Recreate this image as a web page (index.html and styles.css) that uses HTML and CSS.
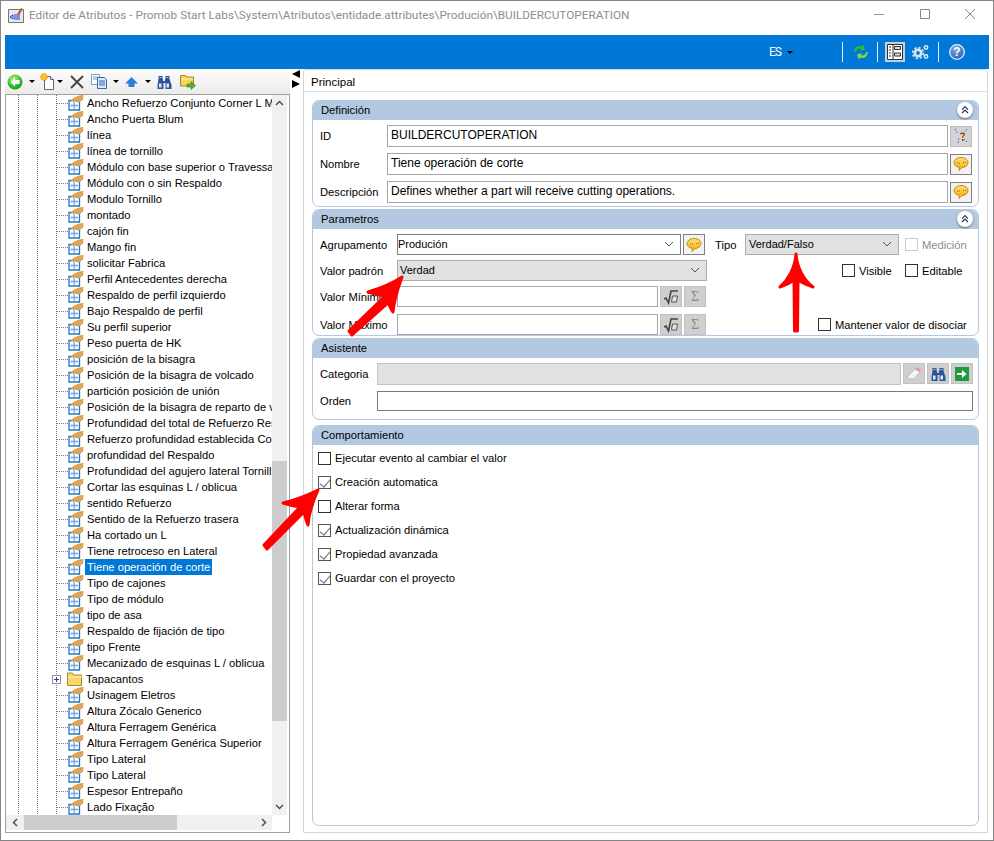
FILE: index.html
```html
<!DOCTYPE html>
<html lang="es">

<head>
    <meta charset="UTF-8">
    <title>Editor de Atributos</title>
    <link rel="stylesheet" href="styles.css">
</head>

<body>
    <svg class="defs" width="0" height="0">
        <defs>
            <radialGradient id="greenball" cx=".4" cy=".3" r=".8">
                <stop offset="0" stop-color="#b8f07a"/>
                <stop offset=".6" stop-color="#2fc02f"/>
                <stop offset="1" stop-color="#0f8a1e"/>
            </radialGradient>
            <radialGradient id="blueball" cx=".4" cy=".3" r=".8">
                <stop offset="0" stop-color="#7fa8e8"/>
                <stop offset="1" stop-color="#2a55b0"/>
            </radialGradient>
            <linearGradient id="bubblefill" x1="0" y1="0" x2="0" y2="1">
                <stop offset="0" stop-color="#ffe27a"/>
                <stop offset="1" stop-color="#f5a800"/>
            </linearGradient>
        </defs>
        <symbol id="attr" viewBox="0 0 16 16">
            <path d="M1 5.500h10.500V15H1z" fill="#fff" stroke="#1f78c8" stroke-width="1.300"/>
            <path d="M6.200 7v7M2.500 10.500h7.500" stroke="#6aa8e0" stroke-width="1.300"/>
            <path d="M3 6C5 2 10 .5 15.500 0L15 4.500 11 7.500z" fill="#d99a48"/>
            <path d="M6 5.500l3-3.500M8.500 6l3-4.500M11 6.500l3-5" stroke="#f3dcb0" stroke-width=".5"/>
        </symbol>
        <symbol id="bubble" viewBox="0 0 16 16">
            <path d="M8 1.500c4 0 7 2 7 5s-3 5-6 5l-3 3 .5-3.200C3 11 1 9 1 6.500s3-5 7-5z" fill="url(#bubblefill)" stroke="#c8860a"/>
            <path d="M4 7h1M6 7h1M10 6.500h1M12 6.500h1" stroke="#a86400"/>
        </symbol>
        <symbol id="binoculars" viewBox="0 0 16 16">
            <path d="M2.500 2h4v3H7v2h2V5h.5V2h4v3l2 6v4h-6V9H7.500v6h-6v-4l1-6z" fill="#2f5298"/>
            <path d="M3 9.500h2.500v4H3zM10.500 9.500H13v4h-2.500z" fill="#dfeafa"/>
            <path d="M3.500 3.500h2M10.500 3.500h2" stroke="#b4c9e8"/>
        </symbol>
        <symbol id="collapse" viewBox="0 0 16 16">
            <path d="M4 7.500l4-4 4 4M4 12l4-4 4 4" fill="none" stroke="#1f3564" stroke-width="1.600"/>
        </symbol>
        <symbol id="chevron" viewBox="0 0 10 6">
            <path d="M1 1l4 4 4-4" fill="none" stroke="#555" stroke-width="1"/>
        </symbol>
        <symbol id="root" viewBox="0 0 16 16">
            <path d="M1 10l2-1 2.500 5L8 2h7" fill="none" stroke="#444" stroke-width="1.600"/>
            <path d="M9.500 7h5l-1 6h-5z" fill="#e4e4e4" stroke="#555"/>
        </symbol>
    </svg>

    <div class="window">
        <div class="titlebar">
            <svg class="app-icon" width="16" height="16" viewBox="0 0 16 16">
                <path d="M.5 2.500h15v13H.5z" fill="#e8e8e8" stroke="#777"/>
                <path d="M2 10l3-2v4zM6 8h6M6 10h6M6 12h6" fill="none" stroke="#1c3fd0"/>
                <path d="M9 7l4-6 2 1-4 6z" fill="#b4622a"/>
            </svg>
            <span class="title-text">Editor de Atributos - Promob Start Labs\System\Atributos\entidade.attributes\Produción\BUILDERCUTOPERATION</span>
            <div class="win-buttons">
                <svg width="12" height="12" viewBox="0 0 12 12"><path d="M1 6.500h10" stroke="#999"/></svg>
                <svg width="12" height="12" viewBox="0 0 12 12"><path d="M1.500 1.500h9v9h-9z" fill="none" stroke="#888"/></svg>
                <svg width="12" height="12" viewBox="0 0 12 12"><path d="M1 1l10 10M11 1L1 11" stroke="#888"/></svg>
            </div>
        </div>

        <div class="bluebar">
            <span class="lang">ES</span>
            <span class="caret caret-lang"></span>
            <span class="blue-sep sep-a"></span>
            <svg class="blue-refresh" width="16" height="16" viewBox="0 0 16 16">
                <path d="M1 7.500C1.500 3.500 5 1 9 2.300L10.500 .5 12 6 6.500 6.500 8 4.500C5.500 4 3.500 5.300 3 8z" fill="#2fb83a"/>
                <path d="M15 8.500C14.500 12.500 11 15 7 13.700L5.500 15.500 4 10 9.500 9.500 8 11.500C10.500 12 12.500 10.700 13 8z" fill="#7ed64a"/>
            </svg>
            <span class="blue-sep sep-b"></span>
            <span class="blue-active">
                <svg width="16" height="16" viewBox="0 0 16 16">
                    <path d="M.5.500h15v15H.5z" fill="#fff" stroke="#333"/>
                    <path d="M6 .500v15" stroke="#333"/>
                    <path d="M2 3h2M2 6h2M2 9h2M2 12h2" stroke="#333"/>
                    <path d="M7.500 2.500h6v3h-6zM7.500 9h6v3h-6z" fill="#ddd" stroke="#333"/>
                </svg>
            </span>
            <svg class="blue-gears" width="17" height="16" viewBox="0 0 17 16">
                <circle cx="6" cy="9" r="3.200" fill="none" stroke="#dfe6ec" stroke-width="2.600"/>
                <circle cx="6" cy="9" r="5.400" fill="none" stroke="#dfe6ec" stroke-width="1.600" stroke-dasharray="2.200 2"/>
                <circle cx="14" cy="3.500" r="1.700" fill="none" stroke="#dfe6ec" stroke-width="1.500"/>
                <circle cx="14" cy="12.500" r="1.700" fill="none" stroke="#dfe6ec" stroke-width="1.500"/>
            </svg>
            <span class="blue-sep sep-c"></span>
            <svg class="blue-help" width="16" height="16" viewBox="0 0 16 16">
                <circle cx="8" cy="8" r="7.300" fill="url(#blueball)" stroke="#e6eefa" stroke-width="1.300"/>
                <text x="8" y="12" text-anchor="middle" class="help-mark">?</text>
            </svg>
        </div>

        <div class="workspace">
            <div class="left-col">
                <div class="toolbar">
                    <svg class="tool-back" width="16" height="16" viewBox="0 0 16 16">
                        <circle cx="8" cy="8" r="7.500" fill="url(#greenball)"/>
                        <path d="M8 3.500L3.500 8 8 12.500V10h4.500V6H8z" fill="#fff"/>
                    </svg>
                    <span class="caret caret-tool"></span>
                    <svg class="tool-new" width="16" height="17" viewBox="0 0 16 17">
                        <path d="M4.500 3.500h6l3 3v10h-9z" fill="#fff" stroke="#667"/>
                        <path d="M10.500 3.500v3h3" fill="#dde" stroke="#667"/>
                        <circle cx="4" cy="4" r="3.400" fill="#f7c22e" stroke="#e08a10" stroke-dasharray="1.500 1"/>
                    </svg>
                    <span class="caret caret-tool caret-new"></span>
                    <svg class="tool-del" width="14" height="14" viewBox="0 0 14 14"><path d="M1 1l12 12M13 1L1 13" stroke="#444" stroke-width="1.800"/></svg>
                    <svg class="tool-copy" width="16" height="15" viewBox="0 0 16 15">
                        <path d="M.5.500h8v10h-8z" fill="#fff" stroke="#7c9cca"/>
                        <path d="M2 3h5M2 5h5" stroke="#7c9cca"/>
                        <path d="M6.500 3.500h7l2 2v9h-9z" fill="#dce8f6" stroke="#3a66a8"/>
                        <path d="M8 7h6M8 9h6M8 11h6" stroke="#3a66a8"/>
                    </svg>
                    <span class="caret caret-tool caret-copy"></span>
                    <svg class="tool-up" width="13" height="10" viewBox="0 0 13 10"><path d="M6.500 0L13 6.500H9.500V10h-6V6.500H0z" fill="#2f7fd8"/></svg>
                    <span class="caret caret-tool caret-up"></span>
                    <svg class="tool-find" width="16" height="16"><use href="#binoculars"/></svg>
                    <svg class="tool-folder" width="16" height="16" viewBox="0 0 16 16">
                        <path d="M.5 1.500h5l1 1.500h7v9H.5z" fill="#f6d55e" stroke="#a88a20"/>
                        <path d="M1.500 5h11" stroke="#fff2b0"/>
                        <path d="M7 10h4V7.500l4.500 4-4.500 4V13H7z" fill="#58b030" stroke="#3a7a18" stroke-width=".6"/>
                    </svg>
                </div>

                <div class="tree">
                    <div class="tree-main">
                        <div class="tree-list">
                            <div class="tree-row"><span class="dash"></span><svg class="row-icon"><use href="#attr"/></svg><span class="row-text">Ancho Refuerzo Conjunto Corner L M</span></div>
                            <div class="tree-row"><span class="dash"></span><svg class="row-icon"><use href="#attr"/></svg><span class="row-text">Ancho Puerta Blum</span></div>
                            <div class="tree-row"><span class="dash"></span><svg class="row-icon"><use href="#attr"/></svg><span class="row-text">línea</span></div>
                            <div class="tree-row"><span class="dash"></span><svg class="row-icon"><use href="#attr"/></svg><span class="row-text">línea de tornillo</span></div>
                            <div class="tree-row"><span class="dash"></span><svg class="row-icon"><use href="#attr"/></svg><span class="row-text">Módulo con base superior o Travessa</span></div>
                            <div class="tree-row"><span class="dash"></span><svg class="row-icon"><use href="#attr"/></svg><span class="row-text">Módulo con o sin Respaldo</span></div>
                            <div class="tree-row"><span class="dash"></span><svg class="row-icon"><use href="#attr"/></svg><span class="row-text">Modulo Tornillo</span></div>
                            <div class="tree-row"><span class="dash"></span><svg class="row-icon"><use href="#attr"/></svg><span class="row-text">montado</span></div>
                            <div class="tree-row"><span class="dash"></span><svg class="row-icon"><use href="#attr"/></svg><span class="row-text">cajón fin</span></div>
                            <div class="tree-row"><span class="dash"></span><svg class="row-icon"><use href="#attr"/></svg><span class="row-text">Mango fin</span></div>
                            <div class="tree-row"><span class="dash"></span><svg class="row-icon"><use href="#attr"/></svg><span class="row-text">solicitar Fabrica</span></div>
                            <div class="tree-row"><span class="dash"></span><svg class="row-icon"><use href="#attr"/></svg><span class="row-text">Perfil Antecedentes derecha</span></div>
                            <div class="tree-row"><span class="dash"></span><svg class="row-icon"><use href="#attr"/></svg><span class="row-text">Respaldo de perfil izquierdo</span></div>
                            <div class="tree-row"><span class="dash"></span><svg class="row-icon"><use href="#attr"/></svg><span class="row-text">Bajo Respaldo de perfil</span></div>
                            <div class="tree-row"><span class="dash"></span><svg class="row-icon"><use href="#attr"/></svg><span class="row-text">Su perfil superior</span></div>
                            <div class="tree-row"><span class="dash"></span><svg class="row-icon"><use href="#attr"/></svg><span class="row-text">Peso puerta de HK</span></div>
                            <div class="tree-row"><span class="dash"></span><svg class="row-icon"><use href="#attr"/></svg><span class="row-text">posición de la bisagra</span></div>
                            <div class="tree-row"><span class="dash"></span><svg class="row-icon"><use href="#attr"/></svg><span class="row-text">Posición de la bisagra de volcado</span></div>
                            <div class="tree-row"><span class="dash"></span><svg class="row-icon"><use href="#attr"/></svg><span class="row-text">partición posición de unión</span></div>
                            <div class="tree-row"><span class="dash"></span><svg class="row-icon"><use href="#attr"/></svg><span class="row-text">Posición de la bisagra de reparto de v</span></div>
                            <div class="tree-row"><span class="dash"></span><svg class="row-icon"><use href="#attr"/></svg><span class="row-text">Profundidad del total de Refuerzo Res</span></div>
                            <div class="tree-row"><span class="dash"></span><svg class="row-icon"><use href="#attr"/></svg><span class="row-text">Refuerzo profundidad establecida Co</span></div>
                            <div class="tree-row"><span class="dash"></span><svg class="row-icon"><use href="#attr"/></svg><span class="row-text">profundidad del Respaldo</span></div>
                            <div class="tree-row"><span class="dash"></span><svg class="row-icon"><use href="#attr"/></svg><span class="row-text">Profundidad del agujero lateral Tornill</span></div>
                            <div class="tree-row"><span class="dash"></span><svg class="row-icon"><use href="#attr"/></svg><span class="row-text">Cortar las esquinas L / oblicua</span></div>
                            <div class="tree-row"><span class="dash"></span><svg class="row-icon"><use href="#attr"/></svg><span class="row-text">sentido Refuerzo</span></div>
                            <div class="tree-row"><span class="dash"></span><svg class="row-icon"><use href="#attr"/></svg><span class="row-text">Sentido de la Refuerzo trasera</span></div>
                            <div class="tree-row"><span class="dash"></span><svg class="row-icon"><use href="#attr"/></svg><span class="row-text">Ha cortado un L</span></div>
                            <div class="tree-row"><span class="dash"></span><svg class="row-icon"><use href="#attr"/></svg><span class="row-text">Tiene retroceso en Lateral</span></div>
                            <div class="tree-row"><span class="dash"></span><svg class="row-icon"><use href="#attr"/></svg><span class="row-text selected">Tiene operación de corte</span></div>
                            <div class="tree-row"><span class="dash"></span><svg class="row-icon"><use href="#attr"/></svg><span class="row-text">Tipo de cajones</span></div>
                            <div class="tree-row"><span class="dash"></span><svg class="row-icon"><use href="#attr"/></svg><span class="row-text">Tipo de módulo</span></div>
                            <div class="tree-row"><span class="dash"></span><svg class="row-icon"><use href="#attr"/></svg><span class="row-text">tipo de asa</span></div>
                            <div class="tree-row"><span class="dash"></span><svg class="row-icon"><use href="#attr"/></svg><span class="row-text">Respaldo de fijación de tipo</span></div>
                            <div class="tree-row"><span class="dash"></span><svg class="row-icon"><use href="#attr"/></svg><span class="row-text">tipo Frente</span></div>
                            <div class="tree-row"><span class="dash"></span><svg class="row-icon"><use href="#attr"/></svg><span class="row-text">Mecanizado de esquinas L / oblicua</span></div>
                            <div class="tree-row folder-row">
                                <span class="plus-box"></span>
                                <svg class="folder-icon" width="16" height="14" viewBox="0 0 16 14">
                                    <path d="M.5 3V1h5l1 2h8v10.500H.5z" fill="#f6d768" stroke="#a88a2c"/>
                                    <path d="M1 5h14" stroke="#fff2b8"/>
                                </svg>
                                <span class="row-text">Tapacantos</span>
                            </div>
                            <div class="tree-row"><span class="dash"></span><svg class="row-icon"><use href="#attr"/></svg><span class="row-text">Usinagem Eletros</span></div>
                            <div class="tree-row"><span class="dash"></span><svg class="row-icon"><use href="#attr"/></svg><span class="row-text">Altura Zócalo Generico</span></div>
                            <div class="tree-row"><span class="dash"></span><svg class="row-icon"><use href="#attr"/></svg><span class="row-text">Altura Ferragem Genérica</span></div>
                            <div class="tree-row"><span class="dash"></span><svg class="row-icon"><use href="#attr"/></svg><span class="row-text">Altura Ferragem Genérica Superior</span></div>
                            <div class="tree-row"><span class="dash"></span><svg class="row-icon"><use href="#attr"/></svg><span class="row-text">Tipo Lateral</span></div>
                            <div class="tree-row"><span class="dash"></span><svg class="row-icon"><use href="#attr"/></svg><span class="row-text">Tipo Lateral</span></div>
                            <div class="tree-row"><span class="dash"></span><svg class="row-icon"><use href="#attr"/></svg><span class="row-text">Espesor Entrepaño</span></div>
                            <div class="tree-row"><span class="dash"></span><svg class="row-icon"><use href="#attr"/></svg><span class="row-text">Lado Fixação</span></div>
                        </div>
                        <div class="vscroll">
                            <svg class="scroll-end" width="15" height="16" viewBox="0 0 15 16"><path d="M4 10l3.500-3.500L11 10" fill="none" stroke="#505050" stroke-width="1.500"/></svg>
                            <div class="vscroll-track"><div class="vscroll-thumb"></div></div>
                            <svg class="scroll-end" width="15" height="16" viewBox="0 0 15 16"><path d="M4 6l3.500 3.500L11 6" fill="none" stroke="#505050" stroke-width="1.500"/></svg>
                        </div>
                    </div>
                    <div class="hscroll">
                        <svg class="scroll-end" width="18" height="15" viewBox="0 0 18 15"><path d="M11 4L7.500 7.500 11 11" fill="none" stroke="#505050" stroke-width="1.500"/></svg>
                        <div class="hscroll-track"><div class="hscroll-thumb"></div></div>
                        <svg class="scroll-end" width="17" height="15" viewBox="0 0 17 15"><path d="M7 4l3.500 3.500L7 11" fill="none" stroke="#505050" stroke-width="1.500"/></svg>
                    </div>
                </div>
            </div>

            <div class="splitter">
                <span class="split-left"></span>
                <span class="split-right"></span>
            </div>

            <div class="right-pane">
                <div class="tab-strip">Principal</div>
                <div class="groups">
                    <div class="group group-def">
                        <div class="group-head">Definición<span class="collapse"><svg width="12" height="12"><use href="#collapse"/></svg></span></div>
                        <div class="def-grid">
                            <label>ID</label>
                            <input type="text" class="field" value="BUILDERCUTOPERATION">
                            <span class="icon-btn id-btn">
                                <svg width="16" height="16" viewBox="0 0 16 16">
                                    <path d="M2 1l3 5M14 1l-2 3M5 15l1-5M14 14l-3-3" stroke="#2560d8" stroke-dasharray="1.500 1.500" fill="none"/>
                                    <path d="M7 6c0-2 5-2 5 0 0 2-2 2-2 4H9c0-2 1.500-2.500 1.500-3.800C10 5.500 9 5.500 9 6.500z" fill="#8a4a14"/>
                                    <path d="M9 11h1.500v2H9z" fill="#8a4a14"/>
                                </svg>
                            </span>
                            <label>Nombre</label>
                            <input type="text" class="field" value="Tiene operación de corte">
                            <span class="icon-btn bubble-btn"><svg width="16" height="16"><use href="#bubble"/></svg></span>
                            <label>Descripción</label>
                            <input type="text" class="field" value="Defines whether a part will receive cutting operations.">
                            <span class="icon-btn bubble-btn"><svg width="16" height="16"><use href="#bubble"/></svg></span>
                        </div>
                    </div>

                    <div class="group group-param">
                        <div class="group-head">Parametros<span class="collapse"><svg width="12" height="12"><use href="#collapse"/></svg></span></div>
                        <div class="param-body">
                            <div class="param-row">
                                <label class="param-label">Agrupamento</label>
                                <div class="combo combo-group"><span>Produción</span><svg width="10" height="6"><use href="#chevron"/></svg></div>
                                <span class="icon-btn bubble-btn btn-next"><svg width="16" height="16"><use href="#bubble"/></svg></span>
                                <label class="tipo-label">Tipo</label>
                                <div class="combo combo-off combo-tipo"><span>Verdad/Falso</span><svg width="10" height="6"><use href="#chevron"/></svg></div>
                                <span class="check check-off check-medicion"></span>
                                <span class="check-text text-off">Medición</span>
                            </div>
                            <div class="param-row">
                                <label class="param-label">Valor padrón</label>
                                <div class="combo combo-off combo-value"><span>Verdad</span><svg width="10" height="6"><use href="#chevron"/></svg></div>
                                <span class="check check-visible"></span>
                                <span class="check-text visible-text">Visible</span>
                                <span class="check"></span>
                                <span class="check-text">Editable</span>
                            </div>
                            <div class="param-row">
                                <label class="param-label">Valor Mínimo</label>
                                <input type="text" class="field field-limit">
                                <span class="icon-btn off-btn btn-next"><svg width="16" height="16"><use href="#root"/></svg></span>
                                <span class="icon-btn off-btn btn-next"><span class="sigma-mark">Σ</span></span>
                            </div>
                            <div class="param-row">
                                <label class="param-label">Valor Máximo</label>
                                <input type="text" class="field field-limit">
                                <span class="icon-btn off-btn btn-next"><svg width="16" height="16"><use href="#root"/></svg></span>
                                <span class="icon-btn off-btn btn-next"><span class="sigma-mark">Σ</span></span>
                                <span class="check check-keep"></span>
                                <span class="check-text">Mantener valor de disociar</span>
                            </div>
                        </div>
                    </div>

                    <div class="group group-wiz">
                        <div class="group-head">Asistente</div>
                        <div class="wiz-grid">
                            <label>Categoria</label>
                            <div class="wiz-cat">
                                <input type="text" class="field field-off" disabled>
                                <span class="icon-btn off-btn">
                                    <svg width="16" height="16" viewBox="0 0 16 16">
                                        <path d="M1 11l8-8 5 3-6 7H4z" fill="#f4f4f4" stroke="#bbb"/>
                                        <path d="M9 3l2-2 4 3-1 2z" fill="#f08fa0"/>
                                    </svg>
                                </span>
                                <span class="icon-btn off-btn"><svg width="16" height="16"><use href="#binoculars"/></svg></span>
                                <span class="icon-btn off-btn">
                                    <svg width="16" height="16" viewBox="0 0 16 16">
                                        <path d="M1 1h14v14H1z" fill="#229a3c"/>
                                        <path d="M3 7h5V4l4.500 4L8 12V9H3z" fill="#fff"/>
                                    </svg>
                                </span>
                            </div>
                            <label>Orden</label>
                            <input type="text" class="field field-dark">
                        </div>
                    </div>

                    <div class="group group-behave">
                        <div class="group-head">Comportamiento</div>
                        <div class="behave-list">
                            <div class="behave-row"><span class="check"></span><span class="check-text">Ejecutar evento al cambiar el valor</span></div>
                            <div class="behave-row"><span class="check checked"></span><span class="check-text">Creación automatica</span></div>
                            <div class="behave-row"><span class="check"></span><span class="check-text">Alterar forma</span></div>
                            <div class="behave-row"><span class="check checked"></span><span class="check-text">Actualización dinámica</span></div>
                            <div class="behave-row"><span class="check checked"></span><span class="check-text">Propiedad avanzada</span></div>
                            <div class="behave-row"><span class="check checked"></span><span class="check-text">Guardar con el proyecto</span></div>
                        </div>
                    </div>
                </div>
            </div>
        </div>

        <!-- red arrows drawn over the window -->
        <svg class="arrows" width="994" height="841" viewBox="0 0 994 841">
            <path d="M402 277C390 285 378 289 368 292 374 294 380 295 385 296L349 331 352 335 388 303C390 306 391 310 393 312 394 300 398 288 402 277z"/>
            <path d="M796 254C795 268 788 280 780 287 786 285 790 283 794 280L794.500 331H797.500L798 280C802 283 808 285 813 287 804 280 797 268 796 254z"/>
            <path d="M318 490C306 496 295 500 283 503 289 505 295 506 300 507L264 545 267 549 304 512C305 516 306 521 308 525 309 513 313 501 318 490z"/>
        </svg>
    </div>
</body>

</html>
```

FILE: styles.css
```css
* {
    box-sizing: border-box;
}

body {
    margin: 0;
    padding: 0;
    background-color: #fff;
    font-family: "Liberation Sans", Arial, sans-serif;
    font-size: 11.2px;
    color: #000;
}

.defs {
    display: block;
    height: 0;
}

.window {
    position: relative;
    display: flex;
    flex-direction: column;
    width: 994px;
    height: 841px;
    border: 1px solid #858585;
    background-color: #fff;
    overflow: hidden;
}

/* title bar */

.titlebar {
    display: flex;
    align-items: center;
    height: 34px;
    padding: 0 0 6px 7px;
    flex-shrink: 0;
}

.app-icon {
    margin-right: 5px;
}

.title-text {
    color: #8e8e8e;
    font-size: 11.800px;
    font-family: Roboto, sans-serif;
    white-space: nowrap;
    flex: 1;
}

.win-buttons {
    display: flex;
    gap: 33.500px;
    margin-bottom: 2px;
    padding-right: 17px;
}

/* blue bar */

.bluebar {
    display: flex;
    align-items: center;
    height: 34px;
    margin: 0 4px;
    background-color: #0078d7;
    flex-shrink: 0;
}

.lang {
    width: 12px;
    margin-left: 764px;
    color: #fff;
    font-family: Roboto, sans-serif;
    font-size: 12px;
    letter-spacing: -1px;
    white-space: nowrap;
}

.caret {
    width: 0;
    height: 0;
    border-left: 3px solid transparent;
    border-right: 3px solid transparent;
    border-top: 3px solid #000;
}

.caret-lang {
    margin-left: 6px;
}

.blue-sep {
    width: 1px;
    height: 20px;
    background-color: #e4eef8;
}

.sep-a {
    margin-left: 49px;
}

.blue-refresh {
    margin-left: 10px;
}

.sep-b {
    margin-left: 8px;
}

.blue-active {
    display: flex;
    align-items: center;
    justify-content: center;
    width: 20px;
    height: 20px;
    margin-left: 7px;
    background-color: #c3cfdb;
}

.blue-gears {
    margin-left: 7px;
}

.sep-c {
    margin-left: 9px;
}

.blue-help {
    margin-left: 10px;
}

.help-mark {
    fill: #fff;
    font-size: 12px;
    font-weight: bold;
    font-family: "Liberation Sans", sans-serif;
}

/* layout below the bars */

.workspace {
    display: flex;
    flex: 1;
    margin: 0 4px 7px;
    min-height: 0;
}

.left-col {
    display: flex;
    flex-direction: column;
    width: 285px;
}

.toolbar {
    display: flex;
    align-items: center;
    height: 25px;
    padding-left: 2px;
    background: linear-gradient(#fdfdfd, #ebebeb);
    flex-shrink: 0;
}

.caret-tool {
    margin-left: 6px;
}

.tool-new {
    margin-left: 5px;
}

.caret-new {
    margin-left: 1px;
}

.tool-del {
    margin-left: 7px;
}

.tool-copy {
    margin-left: 7px;
}

.tool-up {
    margin-left: 6px;
}

.caret-up {
    margin-left: 7px;
}

.tool-find {
    margin-left: 5px;
}

.tool-folder {
    margin-left: 8px;
}

/* tree */

.tree {
    display: flex;
    flex-direction: column;
    flex: 1;
    width: 285px;
    border: 1px solid #a0a0a0;
    min-height: 0;
}

.tree-main {
    display: flex;
    height: 720px;
}

.tree-list {
    width: 266px;
    overflow: hidden;
    background-image:
        linear-gradient(#777 50%, transparent 50%),
        linear-gradient(#777 50%, transparent 50%),
        linear-gradient(#777 50%, transparent 50%);
    background-size: 1px 2px;
    background-position: 12px 0, 31px 0, 50px 0;
    background-repeat: repeat-y;
}

.tree-row {
    display: flex;
    align-items: center;
    height: 16px;
    padding-left: 51px;
    white-space: nowrap;
}

.dash {
    width: 11px;
    height: 1px;
    background-image: linear-gradient(90deg, #777 50%, transparent 50%);
    background-size: 2px 1px;
    flex-shrink: 0;
}

.row-icon {
    width: 16px;
    height: 16px;
    flex-shrink: 0;
}

.row-text {
    margin-left: 1px;
    padding: 0 2px;
    line-height: 16px;
}

.selected {
    background-color: #0078d7;
    color: #fff;
}

.folder-row {
    padding-left: 46px;
}

.plus-box {
    position: relative;
    width: 9px;
    height: 9px;
    border: 1px solid #919191;
    background-color: #fff;
    flex-shrink: 0;
}

.plus-box::before {
    content: "";
    position: absolute;
    left: 1px;
    top: 3px;
    width: 5px;
    height: 1px;
    background-color: #2040a0;
}

.plus-box::after {
    content: "";
    position: absolute;
    left: 3px;
    top: 1px;
    width: 1px;
    height: 5px;
    background-color: #2040a0;
}

.folder-icon {
    margin-left: 6px;
    flex-shrink: 0;
}

.vscroll {
    display: flex;
    flex-direction: column;
    width: 15px;
    background-color: #f0f0f0;
}

.vscroll-track {
    flex: 1;
    padding-top: 350px;
}

.vscroll-thumb {
    height: 260px;
    background-color: #cdcdcd;
}

.hscroll {
    display: flex;
    width: 266px;
    height: 15px;
    background-color: #f0f0f0;
}

.hscroll-track {
    flex: 1;
}

.hscroll-thumb {
    width: 153px;
    height: 15px;
    background-color: #cdcdcd;
}

.splitter {
    display: flex;
    flex-direction: column;
    gap: 2px;
    width: 13px;
    padding: 1px 0 0 2px;
}

.split-left {
    width: 0;
    height: 0;
    border-top: 4px solid transparent;
    border-bottom: 4px solid transparent;
    border-right: 8px solid #000;
}

.split-right {
    width: 0;
    height: 0;
    border-top: 4px solid transparent;
    border-bottom: 4px solid transparent;
    border-left: 8px solid #000;
}

/* right side */

.right-pane {
    display: flex;
    flex-direction: column;
    width: 685px;
    border: 1px solid #d6d6d6;
    border-radius: 3px 3px 0 0;
}

.tab-strip {
    height: 22px;
    padding: 6px 0 0 7px;
    border-bottom: 1px solid #e2e2e2;
    font-size: 11.500px;
    flex-shrink: 0;
}

.groups {
    display: flex;
    flex-direction: column;
    flex: 1;
    gap: 2px;
    padding: 8px 8px 6px 8px;
    min-height: 0;
}

.group {
    border: 1px solid #b3c8e1;
    border-radius: 7px;
    overflow: hidden;
    flex-shrink: 0;
}

.group-def {
    height: 107px;
}

.group-param {
    height: 127px;
}

.group-wiz {
    height: 82px;
}

.group-behave {
    flex: 1;
    margin-top: 3px;
}

.group-head {
    display: flex;
    align-items: center;
    justify-content: space-between;
    height: 19px;
    padding: 0 5px 2px 8px;
    background-color: #b3c8e1;
}

.collapse {
    display: flex;
    align-items: center;
    justify-content: center;
    width: 16px;
    height: 16px;
    border-radius: 50%;
    background-color: #fff;
    box-shadow: 0 1px 2px #667;
}

.field {
    display: block;
    width: 100%;
    height: 22px;
    padding: 0 3px 2px;
    border: 1px solid #a6a6a6;
    background-color: #fff;
    font-family: inherit;
    font-size: 12px;
    color: #000;
    outline: none;
}

.icon-btn {
    display: flex;
    align-items: center;
    justify-content: center;
    width: 22px;
    height: 21px;
    flex-shrink: 0;
}

.bubble-btn {
    border: 1px solid #808080;
    background-color: #f2f2f2;
}

.id-btn {
    background-color: #d4d4d4;
    border: 1px solid #bdbdbd;
}

.off-btn {
    background-color: #cfcfcf;
    border: 1px solid #c2c2c2;
    color: #777;
}

.btn-next {
    margin-left: 2px;
}

.sigma-mark {
    font-size: 14px;
    color: #888;
    font-family: "Liberation Serif", serif;
}

.def-grid {
    display: grid;
    grid-template-columns: 65px 561px 22px;
    column-gap: 2px;
    row-gap: 6px;
    align-items: center;
    padding: 5px 0 0 7px;
}

.param-body {
    display: flex;
    flex-direction: column;
    gap: 5px;
    padding: 5px 0 0 7px;
}

.param-row {
    display: flex;
    align-items: center;
    height: 21px;
}

.param-row:last-child {
    margin-top: 2px;
}

.param-label {
    width: 77px;
    flex-shrink: 0;
}

.combo {
    display: flex;
    align-items: center;
    justify-content: space-between;
    height: 21px;
    padding: 0 6px 2px 0;
    border: 1px solid #808080;
    background-color: #fff;
    font-size: 11px;
}

.combo-off {
    padding-left: 2px;
    border-color: #adadad;
    background-color: #e1e1e1;
}

.combo-group {
    width: 284px;
}

.combo-value {
    width: 310px;
}

.tipo-label {
    margin-left: 10px;
    width: 30px;
}

.combo-tipo {
    width: 154px;
    padding-left: 3px;
}

.field-limit {
    width: 261px;
    height: 21px;
}

.check {
    position: relative;
    display: block;
    width: 13px;
    height: 13px;
    margin-right: 4px;
    border: 1px solid #333;
    background-color: #fff;
    flex-shrink: 0;
}

.check-off {
    border-color: #ccc;
}

.checked {
    border-color: #555;
}

.checked::after {
    content: "";
    position: absolute;
    left: 3px;
    top: 0;
    width: 5px;
    height: 9px;
    border-right: 1.500px solid #666;
    border-bottom: 1.500px solid #666;
    transform: rotate(40deg);
}

.check-text {
    white-space: nowrap;
}

.text-off {
    color: #8d8d8d;
}

.check-medicion {
    margin-left: 6px;
}

.check-visible {
    margin-left: 135px;
}

.visible-text {
    width: 46px;
}

.check-keep {
    margin-left: 112px;
}

.wiz-grid {
    display: grid;
    grid-template-columns: 57px 596px;
    row-gap: 6px;
    align-items: center;
    padding: 5px 0 0 7px;
}

.wiz-cat {
    display: flex;
    gap: 2px;
}

.field-off {
    flex: 1;
    background-color: #e1e1e1;
    border-color: #c4c4c4;
}

.field-dark {
    height: 20px;
    border-color: #7a7a7a;
}

.behave-list {
    display: flex;
    flex-direction: column;
    padding: 1px 0 0 5px;
}

.behave-row {
    display: flex;
    align-items: center;
    height: 24px;
}

/* annotation layer */

.arrows {
    position: absolute;
    left: -1px;
    top: -1px;
    pointer-events: none;
}

.arrows path {
    fill: #f00;
    stroke: #f00;
    stroke-width: 3;
    stroke-linejoin: round;
}
```
